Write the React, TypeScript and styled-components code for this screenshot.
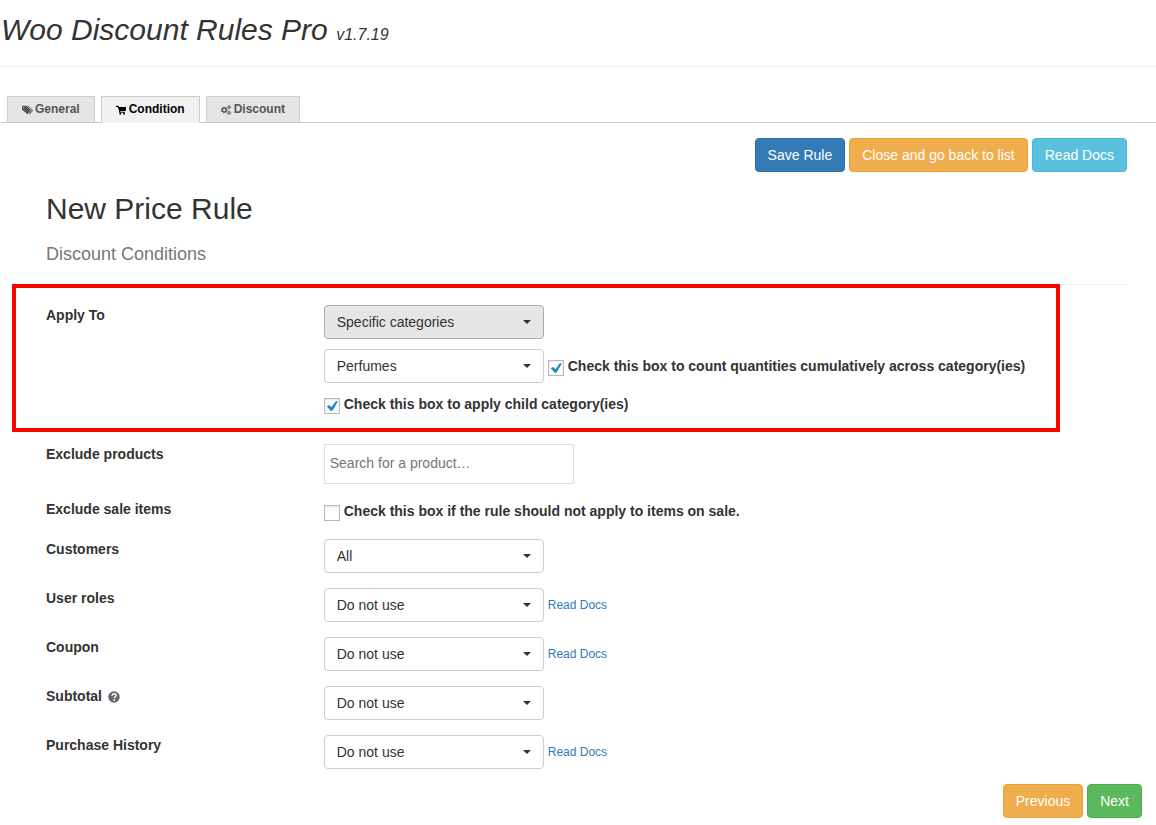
import React, { useId } from "react";
import styled, { createGlobalStyle } from "styled-components";

const GlobalStyle = createGlobalStyle`
  *, *::before, *::after { box-sizing: border-box; }
  body {
    margin: 0;
    background: #fff;
    color: #333;
    font-family: "Liberation Sans", Arial, sans-serif;
    font-size: 14px;
    line-height: 20px;
  }
  button, input, select { font: inherit; }
`;

const Page = styled.div`
  padding: 13px 0 7px 1px;
`;

const PageTitle = styled.h1`
  margin: 0;
  font-size: 30px;
  line-height: 33px;
  font-weight: 400;
  font-style: italic;

  small { font-size: 16px; line-height: 16px; }
`;

const Rule = styled.hr`
  margin: 20px 0;
  border: 0;
  border-top: 1px solid #eee;
`;

const TabBar = styled.nav`
  display: flex;
  gap: 6px;
  margin-top: 29px;
  padding-left: 6px;
  border-bottom: 1px solid #ccc;
`;

const Tab = styled.a<{ $active?: boolean }>`
  display: flex;
  align-items: center;
  gap: 3px;
  height: 27px;
  margin-bottom: -1px;
  padding: 0 14px 1px;
  border: 1px solid #ccc;
  border-bottom-color: ${(p) => (p.$active ? "#f1f1f1" : "#ccc")};
  background: ${(p) => (p.$active ? "#f1f1f1" : "#e5e5e5")};
  color: ${(p) => (p.$active ? "#000" : "#555")};
  font-size: 12px;
  line-height: 16px;
  font-weight: 700;
  text-decoration: none;

  svg { display: block; margin-top: 2px; overflow: visible; }
`;

const Actions = styled.div<{ $inset?: boolean }>`
  display: flex;
  justify-content: flex-end;
  gap: 4px;
  padding-right: ${(p) => (p.$inset ? "15px" : "0")};
`;

const tones = {
  primary: ["#337ab7", "#2e6da4"],
  warning: ["#f0ad4e", "#eea236"],
  info: ["#5bc0de", "#46b8da"],
  success: ["#5cb85c", "#4cae4c"],
};

const Button = styled.button<{ $tone: keyof typeof tones }>`
  height: 34px;
  padding: 6px 12px;
  border: 1px solid ${(p) => tones[p.$tone][1]};
  border-radius: 4px;
  background: ${(p) => tones[p.$tone][0]};
  color: #fff;
  line-height: 20px;
  cursor: pointer;
`;

const Content = styled.main`
  padding: 15px 14px 0 30px;
`;

const FormHead = styled.header`
  margin: 20px 15px 0;

  h2 {
    margin: 0;
    font-size: 30px;
    line-height: 33px;
    font-weight: 400;
  }
  p {
    margin: 19px 0 0;
    color: #777;
    font-size: 18px;
    line-height: 20px;
  }
`;

const Form = styled.form`
  display: flex;
  flex-direction: column;
  gap: 15px;
`;

const Row = styled.div<{ $highlight?: boolean }>`
  position: relative;
  display: grid;
  grid-template-columns: 25% 75%;
  padding-bottom: ${(p) => (p.$highlight ? "15px" : "0")};

  &::after {
    content: ${(p) => (p.$highlight ? '""' : "none")};
    position: absolute;
    inset: -21px 82px -3px -19px;
    border: 4px solid #f00;
    pointer-events: none;
  }
`;

const RowLabel = styled.label`
  display: flex;
  align-items: flex-start;
  gap: 6px;
  padding: 0 15px;
  font-weight: 700;

  svg { margin-top: 5px; }
`;

const Controls = styled.div`
  display: flex;
  flex-direction: column;
  gap: 10px;
  padding: 0 15px;
`;

const Line = styled.div`
  display: flex;
  align-items: center;
  gap: 4px;
`;

const SelectBox = styled.span`
  position: relative;
  width: 220px;

  &::after {
    content: "";
    position: absolute;
    top: 15px;
    right: 13px;
    border: 4px solid transparent;
    border-top-color: #333;
    border-bottom: 0;
    pointer-events: none;
  }
`;

const Select = styled.select<{ $pressed?: boolean }>`
  display: block;
  width: 100%;
  height: 34px;
  padding: 6px 25px 6px 12px;
  appearance: none;
  border: 1px solid ${(p) => (p.$pressed ? "#adadad" : "#ccc")};
  border-radius: 4px;
  background: ${(p) => (p.$pressed ? "#e6e6e6" : "#fff")};
  color: #333;
  line-height: 20px;
`;

const CheckLabel = styled.label<{ $space?: string }>`
  display: flex;
  align-items: flex-end;
  gap: 4px;
  padding: ${(p) => p.$space ?? "0"};
  font-weight: 700;
`;

const CheckFrame = styled.span`
  display: grid;
  width: 16px;
  height: 16px;

  > * { grid-area: 1 / 1; }
  svg { z-index: 1; pointer-events: none; visibility: hidden; }
  input:checked + svg { visibility: visible; }
`;

const Tick = styled.input`
  width: 16px;
  height: 16px;
  margin: 0;
  appearance: none;
  border: 1px solid #b4b9be;
  background: #fff;
  box-shadow: inset 0 1px 2px rgba(0, 0, 0, 0.1);
`;

const Search = styled.input`
  width: 250px;
  height: 40px;
  padding: 0 5px 2px;
  border: 1px solid #ddd;
  background: #fff;
  color: #333;

  &::placeholder { color: #777; opacity: 1; }
`;

const DocLink = styled.a`
  color: #337ab7;
  font-size: 12px;
  text-decoration: none;
`;

const Footer = styled.footer`
  margin-top: 15px;
`;

function TagsIcon() {
  return (
    <svg width="10" height="10" viewBox="0 0 20 20" fill="currentColor" aria-hidden="true">
      <path fillRule="evenodd" d="M0 3Q0 1.500 1.500 1.500H9L17.500 9.500Q18.500 10.500 17.500 11.500L12 17.500Q11 18.500 10 17.500L0 9.500ZM3.500 3.800a1 1 0 1 0 .01 0Z" />
      <path d="M11 1.500H13L21.300 9.800Q22 11 21.300 12L15.500 18.300 13.500 17.300 19 11.500Q19.800 10.500 19 9.500Z" />
    </svg>
  );
}

function CartIcon() {
  return (
    <svg width="10" height="10" viewBox="0 0 20 20" fill="currentColor" aria-hidden="true">
      <path d="M0 1.500H4.500L6 4H20V10.500L19 12H8.500V13.500H18V15.500H6.200V11.500L3.500 3.800H0Z" />
      <circle cx="8.500" cy="17.500" r="1.800" />
      <circle cx="16" cy="17.500" r="1.800" />
    </svg>
  );
}

function CogsIcon() {
  return (
    <svg width="10" height="10" viewBox="0 0 20 20" fill="none" stroke="currentColor" aria-hidden="true">
      <circle cx="6.500" cy="10" r="4" strokeWidth="3" />
      <circle cx="6.500" cy="10" r="5.700" strokeWidth="1.800" strokeDasharray="2.300 2.177" />
      <circle cx="16" cy="4.500" r="2.300" strokeWidth="2" />
      <circle cx="16" cy="4.500" r="3.500" strokeWidth="1.200" strokeDasharray="1.700 1.965" />
      <circle cx="16" cy="15.500" r="2.300" strokeWidth="2" />
      <circle cx="16" cy="15.500" r="3.500" strokeWidth="1.200" strokeDasharray="1.700 1.965" />
    </svg>
  );
}

function HelpIcon() {
  return (
    <svg width="12" height="12" viewBox="0 0 22 22" role="img" aria-label="Help">
      <circle cx="11" cy="11" r="10.500" fill="#666" />
      <path d="M7.500 8.500C7.500 6 9 5 11 5s3.700 1.200 3.700 3.300c0 2.400-3.200 2.300-3.200 4.900" fill="none" stroke="#fff" strokeWidth="2.600" />
      <path d="M10 15h3v3h-3z" fill="#fff" />
    </svg>
  );
}

function Check({ text, checked, space }: { text: string; checked?: boolean; space?: string }) {
  return (
    <CheckLabel $space={space}>
      <CheckFrame>
        <Tick type="checkbox" defaultChecked={checked} />
        <svg width="16" height="16" viewBox="0 0 16 16" aria-hidden="true">
          <path d="M2.800 8.200 5.200 6.900 7.400 9.300 11.700 3.200H14L8.500 12.800H6.500Z" fill="#1e8cbe" />
        </svg>
      </CheckFrame>
      {text}
    </CheckLabel>
  );
}

function Dropdown({ value, ...rest }: { value: string; id?: string; pressed?: boolean; label?: string }) {
  return (
    <SelectBox>
      <Select id={rest.id} aria-label={rest.label} $pressed={rest.pressed}>
        <option>{value}</option>
      </Select>
    </SelectBox>
  );
}

function SelectRow({ label, value, docs, help }: { label: string; value: string; docs?: boolean; help?: boolean }) {
  const id = useId();
  return (
    <Row>
      <RowLabel htmlFor={id}>
        {label}
        {help && <HelpIcon />}
      </RowLabel>
      <Controls>
        <Line>
          <Dropdown id={id} value={value} />
          {docs && <DocLink href="#docs">Read Docs</DocLink>}
        </Line>
      </Controls>
    </Row>
  );
}

export default function App() {
  return (
    <Page>
      <GlobalStyle />
      <PageTitle>
        Woo Discount Rules Pro <small>v1.7.19</small>
      </PageTitle>
      <Rule />
      <TabBar>
        <Tab href="#general"><TagsIcon />General</Tab>
        <Tab href="#condition" $active aria-current="page"><CartIcon />Condition</Tab>
        <Tab href="#discount"><CogsIcon />Discount</Tab>
      </TabBar>
      <Content>
        <Actions $inset>
          <Button type="button" $tone="primary">Save Rule</Button>
          <Button type="button" $tone="warning">Close and go back to list</Button>
          <Button type="button" $tone="info">Read Docs</Button>
        </Actions>
        <FormHead>
          <h2>New Price Rule</h2>
          <p>Discount Conditions</p>
          <Rule />
        </FormHead>
        <Form>
          <Row $highlight>
            <RowLabel htmlFor="apply-to">Apply To</RowLabel>
            <Controls>
              <Dropdown id="apply-to" value="Specific categories" pressed />
              <Line>
                <Dropdown value="Perfumes" label="Category" />
                <Check checked text="Check this box to count quantities cumulatively across category(ies)" />
              </Line>
              <Check checked space="1px 0 0" text="Check this box to apply child category(ies)" />
            </Controls>
          </Row>
          <Row>
            <RowLabel htmlFor="exclude-products">Exclude products</RowLabel>
            <Controls>
              <Search id="exclude-products" type="text" placeholder="Search for a product…" />
            </Controls>
          </Row>
          <Row>
            <RowLabel as="span">Exclude sale items</RowLabel>
            <Controls>
              <Check space="2px 0 3px" text="Check this box if the rule should not apply to items on sale." />
            </Controls>
          </Row>
          <SelectRow label="Customers" value="All" />
          <SelectRow label="User roles" value="Do not use" docs />
          <SelectRow label="Coupon" value="Do not use" docs />
          <SelectRow label="Subtotal" value="Do not use" help />
          <SelectRow label="Purchase History" value="Do not use" docs />
        </Form>
        <Footer>
          <Actions>
            <Button type="button" $tone="warning">Previous</Button>
            <Button type="button" $tone="success">Next</Button>
          </Actions>
        </Footer>
      </Content>
    </Page>
  );
}
